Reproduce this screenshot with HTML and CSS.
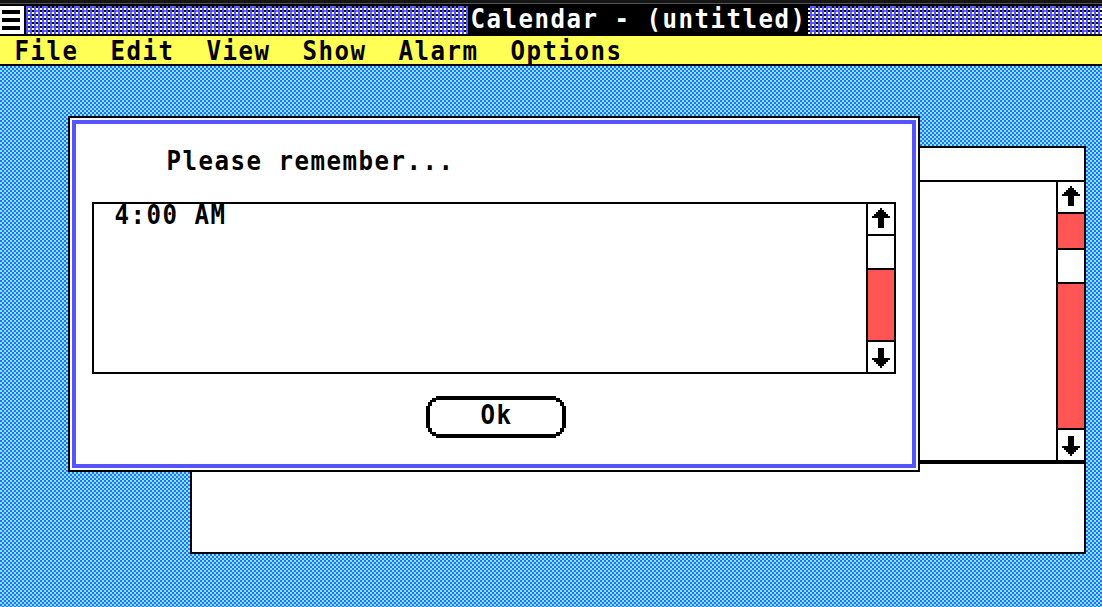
FILE: index.html
```html
<!DOCTYPE html>
<html lang="en">
<head>
<meta charset="utf-8">
<title>Calendar - (untitled)</title>
<link rel="stylesheet" href="styles.css">
</head>
<body>
<svg class="defs" width="0" height="0">
  <symbol id="arrow" viewBox="0 0 18 20"><path d="M8 0h2v2h2v2h2v2h2v2h2v2h-6v10H6V10H0V8h2V6h2V4h2V2h2z"/></symbol>
</svg>
<header class="titlebar">
  <div class="sysmenu"><i></i><i></i><i></i></div>
  <svg class="weave" shape-rendering="crispEdges">
    <defs><pattern id="weave" width="16" height="8" patternUnits="userSpaceOnUse">
      <rect width="16" height="8" fill="#5555ff"/>
      <path fill="#fff" d="M2 2h2v2h-2zM6 2h2v2h-2zM10 2h2v2h-2zM14 2h2v2h-2zM2 6h2v2h-2zM6 6h2v2h-2zM10 6h2v2h-2zM14 6h2v2h-2z"/>
      <path fill="#000" d="M6 0h2v2h-2zM10 0h2v2h-2zM14 0h2v2h-2zM2 4h2v2h-2zM6 4h2v2h-2zM14 4h2v2h-2z"/>
    </pattern></defs>
    <rect width="100%" height="28" fill="url(#weave)"/>
  </svg>
  <h1 class="title"><span class="text">Calendar - (untitled)</span></h1>
</header>
<nav class="menubar">
  <span class="c4"><span class="text">File</span></span>
  <span class="c4"><span class="text">Edit</span></span>
  <span class="c4"><span class="text">View</span></span>
  <span class="c4"><span class="text">Show</span></span>
  <span class="c5"><span class="text">Alarm</span></span>
  <span class="c7"><span class="text">Options</span></span>
</nav>
<main class="desktop">
  <section class="calendar">
    <div class="heading"></div>
    <div class="page">
      <div class="scroll">
        <div class="step"><svg class="arrow"><use href="#arrow"/></svg></div>
        <div class="track before"></div>
        <div class="thumb"></div>
        <div class="track"></div>
        <div class="step"><svg class="arrow down"><use href="#arrow"/></svg></div>
      </div>
    </div>
    <div class="notes"></div>
  </section>
  <section class="dialog">
    <p class="message"><span class="text">Please remember...</span></p>
    <div class="list">
      <div class="item"><span class="text">4:00 AM</span></div>
      <div class="scroll">
        <div class="step"><svg class="arrow"><use href="#arrow"/></svg></div>
        <div class="thumb"></div>
        <div class="track"></div>
        <div class="step"><svg class="arrow down"><use href="#arrow"/></svg></div>
      </div>
    </div>
    <button class="ok">
      <svg class="outline" viewBox="0 0 140 42" shape-rendering="crispEdges">
        <path fill-rule="evenodd" d="M10 0H130V2H134V4H136V6H138V10H140V32H138V36H136V38H134V40H130V42H10V40H6V38H4V36H2V32H0V10H2V6H4V4H6V2H10zM10 4V6H6V10H4V32H6V36H10V38H130V36H134V32H136V10H134V6H130V4z"/>
      </svg>
      <span class="text">Ok</span>
    </button>
  </section>
</main>
</body>
</html>
```
FILE: styles.css
```css
* { box-sizing: border-box; margin: 0; padding: 0; }
body {
  width: 1102px; height: 607px; overflow: hidden;
  display: flex; flex-direction: column;
  font: bold 27.4px/28px "DejaVu Sans Mono", monospace;
  color: #000; background: #000;
}
.defs { position: absolute; }
.text {
  display: inline-block; white-space: pre; vertical-align: top;
  letter-spacing: 1.69px; text-indent: .7px;
  transform: scaleX(.88); transform-origin: 0 0;
}
.titlebar {
  height: 36px; flex: none; display: grid; grid-template-columns: 24px 1fr;
  column-gap: 2px; padding: 6px 0 2px; position: relative;
  background: linear-gradient(#151515 3px, #555 3px, #555 4px, #000 4px);
}
.sysmenu { background: #fff; padding: 4px 4px 4px 2px; display: flex; flex-direction: column; gap: 4px; }
.sysmenu i { height: 4px; background: #000; }
.weave { width: 100%; height: 28px; display: block; }
.title {
  position: absolute; left: 468px; top: 6px; width: 340px; height: 28px;
  padding-left: 2px; background: #000; color: #fff; font-size: inherit; line-height: 26px;
}
.menubar {
  height: 30px; flex: none; display: flex; gap: 32px; padding-left: 14px;
  background: #ff5; border-bottom: 2px solid #000; line-height: 30px;
}
.c4 { width: 64px; }
.c5 { width: 80px; }
.c7 { width: 112px; }
.desktop {
  flex: 1; position: relative;
  background: repeating-conic-gradient(#55f 0 25%, #5ff 0 50%) 0 0 / 4px 4px;
}
.calendar {
  position: absolute; left: 190px; top: 80px; width: 896px; height: 408px;
  background: #fff; border: 2px solid #000; display: flex; flex-direction: column;
}
.heading { height: 34px; border-bottom: 2px solid #000; }
.page { height: 282px; border-bottom: 4px solid #000; display: flex; justify-content: flex-end; }
.notes { flex: 1; }
.scroll { width: 28px; border-left: 2px solid #000; display: flex; flex-direction: column; }
.step { height: 30px; display: flex; justify-content: center; padding-top: 4px; }
.arrow { width: 18px; height: 20px; display: block; shape-rendering: crispEdges; }
.down { transform: scaleY(-1); }
.track { flex: 1; background: #f55; border: solid #000; border-width: 0 0 2px; }
.thumb { height: 34px; border-bottom: 2px solid #000; }
.before { flex: none; height: 38px; border-top: 2px solid #000; }
.calendar .step:last-child { padding-top: 6px; }
.dialog {
  position: absolute; left: 68px; top: 50px; width: 852px; height: 356px;
  background: #fff; border: 2px solid #000; padding: 2px;
  box-shadow: inset 0 0 0 2px #fff, inset 0 0 0 6px #55f;
}
.message { padding: 27px 0 0 94px; height: 82px; }
.list {
  margin-left: 20px; width: 804px; height: 172px; border: 2px solid #000;
  display: flex; justify-content: space-between;
}
.item { padding-left: 20px; line-height: 22px; }
.list .thumb { height: 36px; border-top: 2px solid #000; }
.list .step:last-child { padding-top: 6px; }
.ok {
  position: relative; display: block; width: 140px; height: 42px; margin: 22px 0 0 354px;
  border: 0; background: none; font: inherit; color: inherit; text-align: left; padding: 0 0 4px 54px;
}
.outline { position: absolute; left: 0; top: 0; width: 140px; height: 42px; }
```
